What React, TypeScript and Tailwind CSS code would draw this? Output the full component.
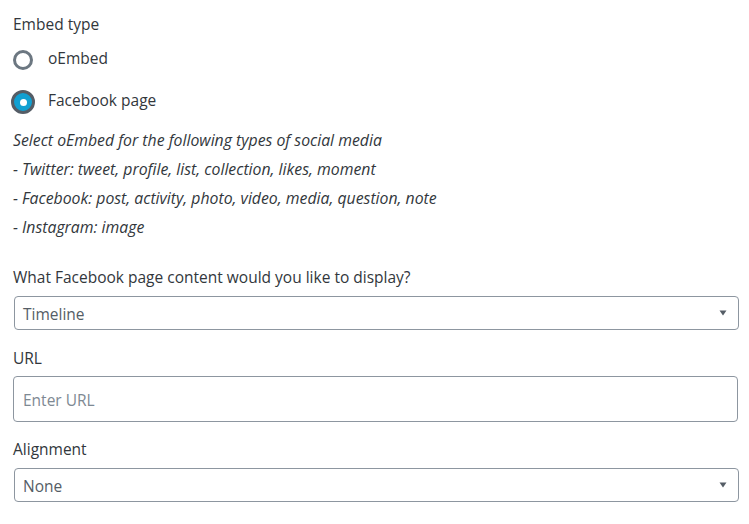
import React from "react";

function Caret() {
  return (
    <svg width="8" height="6" viewBox="0 0 8 6" className="shrink-0">
      <path d="M0.5 0.5 H7.5 L4 5.5 Z" fill="#555d66" />
    </svg>
  );
}

function Select({ value }: { value: string }) {
  return (
    <div className="ml-px flex h-[34px] w-[725px] items-center justify-between rounded-[4px] border border-[#8d96a0] bg-white pl-[8px] pr-[11px] text-[#555d66]">
      <span className="pt-[2px]">{value}</span>
      <Caret />
    </div>
  );
}

export default function App() {
  return (
    <div
      className="min-h-[524px] w-[749px] bg-white pl-[13px] pt-[14px] text-[15.5px] leading-5 text-[#32373c]"
      style={{ fontFamily: '"Open Sans", "Noto Sans", sans-serif' }}
    >
      <div>Embed type</div>

      <div className="mt-[14px] flex h-6 items-center">
        <div className="h-5 w-5 shrink-0 rounded-full border-[3px] border-[#6c7781] bg-white" />
        <span className="ml-[15px] -mt-[4px]">oEmbed</span>
      </div>

      <div className="mt-[18px] flex h-6 items-center">
        <div className="relative h-5 w-5 shrink-0">
          <div className="absolute -inset-[2px] flex items-center justify-center rounded-full border-[3px] border-[#555d66] bg-[#11a0d2]">
            <div className="h-[7px] w-[7px] rounded-full bg-white" />
          </div>
        </div>
        <span className="ml-[15px] -mt-[4px]">Facebook page</span>
      </div>

      <div className="mt-[12px] text-[15.8px] italic leading-[29px] text-[#32373c]">
        <div>Select oEmbed for the following types of social media</div>
        <div>- Twitter: tweet, profile, list, collection, likes, moment</div>
        <div>- Facebook: post, activity, photo, video, media, question, note</div>
        <div>- Instagram: image</div>
      </div>

      <div className="mt-[25px]">What Facebook page content would you like to display?</div>
      <div className="mt-[9px]">
        <Select value="Timeline" />
      </div>

      <div className="mt-[18px]">URL</div>
      <div className="mt-[8px] flex h-[46px] w-[725px] items-center rounded-[4px] border border-[#8d96a0] bg-white pl-[9px] text-[#7e8993]">
        <span className="pt-[2px]">Enter URL</span>
      </div>

      <div className="mt-[17px]">Alignment</div>
      <div className="mt-[9px]">
        <Select value="None" />
      </div>
    </div>
  );
}
